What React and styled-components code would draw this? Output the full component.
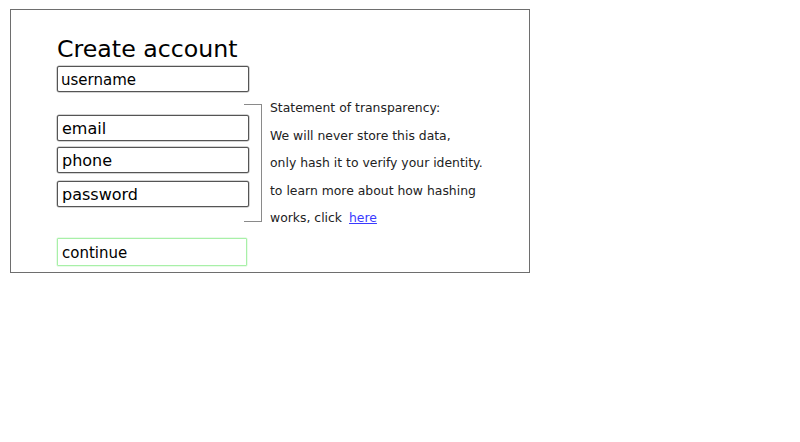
import React from 'react'
import styled, { createGlobalStyle } from 'styled-components'

const GlobalStyle = createGlobalStyle`
	body {
		margin: 0;
		background: #fff;
		font-family: "DejaVu Sans", sans-serif;
	}
`

const Card = styled.div`
	box-sizing: border-box;
	width: 520px;
	height: 264px;
	margin: 9px 0 0 10px;
	border: 1px solid #6e6e6e;
	padding: 25px 0 0 46px;
`

const Title = styled.h1`
	margin: 0;
	font-size: 23.7px;
	font-weight: normal;
	line-height: 28px;
	color: #000;
`

const Body = styled.div`
	display: flex;
	align-items: flex-start;
	margin-top: 3px;
`

const Fields = styled.div`
	display: flex;
	flex-direction: column;
	width: 192px;
`

const Field = styled.input`
	box-sizing: border-box;
	width: 192px;
	height: 26px;
	margin: ${(p) => p.$top || 0}px 0 0;
	padding: 1px 0 0 ${(p) => (p.$small ? 3 : 4)}px;
	border: 1px solid #555;
	border-radius: 2px;
	box-shadow: 0 0 0 0.5px #aaa;
	font-family: "DejaVu Sans", sans-serif;
	font-size: ${(p) => (p.$small ? 15 : 16)}px;
	color: #000;
	outline: none;

	&::placeholder {
		color: #000;
		opacity: 1;
	}
`

const Continue = styled.button`
	box-sizing: border-box;
	width: 190px;
	height: 28px;
	margin-top: 31px;
	padding: 2px 0 0 4px;
	border: 1px solid #a8f0a8;
	border-radius: 1px;
	box-shadow: 0 0 0 0.5px #d4f8d4;
	background: #fff;
	text-align: left;
	font-family: "DejaVu Sans", sans-serif;
	font-size: 15px;
	color: #000;
`

const Aside = styled.div`
	display: flex;
	align-items: flex-start;
	margin: 27px 0 0 -5px;
`

const Bracket = styled.div`
	box-sizing: border-box;
	width: 18px;
	height: 118px;
	margin-top: 11px;
	border: 1px solid #8a8a8a;
	border-left: none;
`

const Statement = styled.div`
	margin: 1px 0 0 8px;
	font-size: 12.4px;
	line-height: 27.5px;
	color: #222;
`

const Link = styled.a`
	margin-left: 7px;
	color: #3a3aff;
	text-decoration: underline;
`

const App = () => (
	<>
		<GlobalStyle />
		<Card>
			<Title>Create account</Title>
			<Body>
				<Fields>
					<Field $small placeholder="username" />
					<Field $top={23} placeholder="email" />
					<Field $top={6} placeholder="phone" />
					<Field $top={8} placeholder="password" />
					<Continue>continue</Continue>
				</Fields>
				<Aside>
					<Bracket />
					<Statement>
						<div>Statement of transparency:</div>
						<div>We will never store this data,</div>
						<div>only hash it to verify your identity.</div>
						<div>to learn more about how hashing</div>
						<div>
							works, click<Link href="#">here</Link>
						</div>
					</Statement>
				</Aside>
			</Body>
		</Card>
	</>
)

export default App
